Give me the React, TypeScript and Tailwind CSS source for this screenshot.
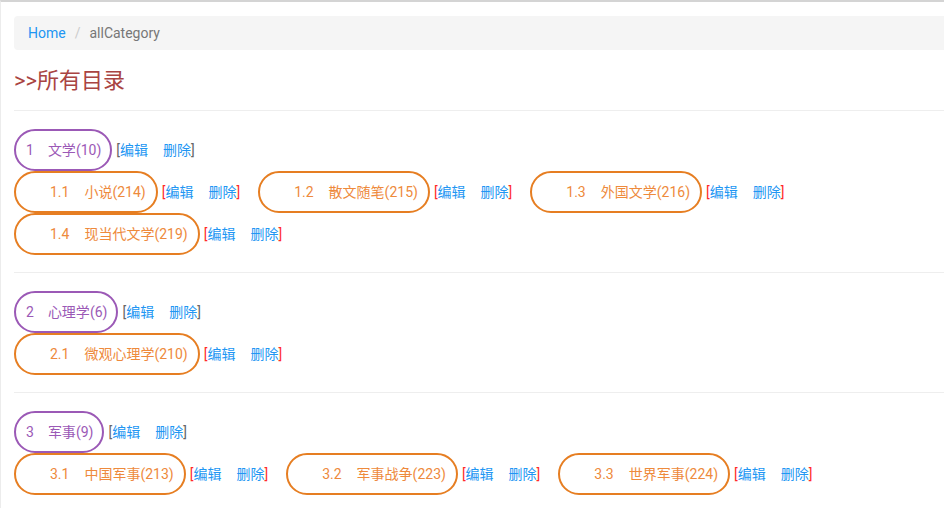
import React from 'react';

type Child = { no: string; name: string; count: number };
type Category = { no: string; name: string; count: number; children: Child[] };

const categories: Category[] = [
  {
    no: '1',
    name: '文学',
    count: 10,
    children: [
      { no: '1.1', name: '小说', count: 214 },
      { no: '1.2', name: '散文随笔', count: 215 },
      { no: '1.3', name: '外国文学', count: 216 },
      { no: '1.4', name: '现当代文学', count: 219 },
    ],
  },
  {
    no: '2',
    name: '心理学',
    count: 6,
    children: [{ no: '2.1', name: '微观心理学', count: 210 }],
  },
  {
    no: '3',
    name: '军事',
    count: 9,
    children: [
      { no: '3.1', name: '中国军事', count: 213 },
      { no: '3.2', name: '军事战争', count: 223 },
      { no: '3.3', name: '世界军事', count: 224 },
    ],
  },
];

const Actions = ({ bracket }: { bracket: string }) => (
  <span className="ml-[4px] whitespace-nowrap text-[14px]">
    <span className={bracket}>[</span>
    <a className="text-[#2196f3] cursor-pointer">编辑</a>
    <a className="ml-[15px] text-[#2196f3] cursor-pointer">删除</a>
    <span className={bracket}>]</span>
  </span>
);

const App = () => {
  return (
    <div
      className="min-h-[508px] border-t-2 border-l border-t-[#d4d4d4] border-l-[#ececec] bg-white pl-[13px] text-[14px] overflow-hidden"
      style={{ fontFamily: 'Roboto, "Noto Sans CJK SC", sans-serif' }}
    >
      {/* Breadcrumb */}
      <div className="mt-[14px] flex h-[34px] items-center rounded-l bg-[#f5f5f5] pl-[14px]">
        <a className="text-[#2196f3] cursor-pointer">Home</a>
        <span className="px-[9px] text-[#cccccc]">/</span>
        <span className="text-[#777777]">allCategory</span>
      </div>

      <h2 className="mt-[16px] mb-[14px] text-[22px] leading-[30px] text-[#a94442]">&gt;&gt;所有目录</h2>

      {categories.map((cat) => (
        <div key={cat.no} className="border-t border-[#eeeeee] pt-[18px] pb-[17px]">
          <div className="flex items-center">
            <span className="flex h-[42px] items-center rounded-full border-2 border-[#9b59b6] pl-[10px] pr-[9px] text-[#9b59b6]">
              <span>{cat.no}</span>
              <span className="ml-[14px]">
                {cat.name}({cat.count})
              </span>
            </span>
            <Actions bracket="text-[#666666]" />
          </div>
          <div className="flex flex-wrap">
            {cat.children.map((c) => (
              <div key={c.no} className="mr-[18px] flex items-center">
                <span className="flex h-[42px] items-center rounded-full border-2 border-[#e67e22] pl-[34px] pr-[10px] text-[#ee8a3c]">
                  <span>{c.no}</span>
                  <span className="ml-[15px]">
                    {c.name}({c.count})
                  </span>
                </span>
                <Actions bracket="text-[#ff2a2a]" />
              </div>
            ))}
          </div>
        </div>
      ))}
    </div>
  );
};

export default App;
